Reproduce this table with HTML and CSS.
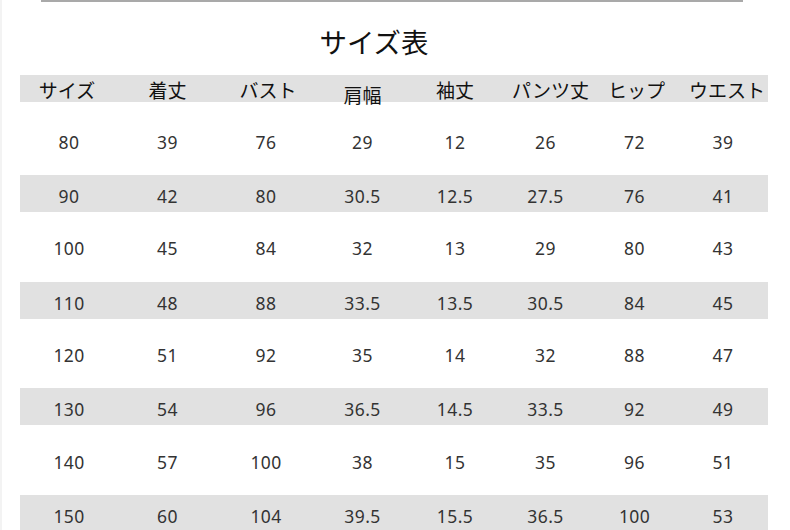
FILE: index.html
```html
<!DOCTYPE html>
<html lang="ja">
<head>
<meta charset="utf-8">
<link rel="stylesheet" href="styles.css">
</head>
<body>
<div class="page">
  <div class="topline"></div>
  <h1 class="title">サイズ表</h1>
  <div class="table">
    <div class="row head">
      <div>サイズ</div><div>着丈</div><div>バスト</div><div class="low">肩幅</div><div>袖丈</div><div>パンツ丈</div><div>ヒップ</div><div>ウエスト</div>
    </div>
    <div class="row first"><div>80</div><div>39</div><div>76</div><div>29</div><div>12</div><div>26</div><div>72</div><div>39</div></div>
    <div class="row alt"><div>90</div><div>42</div><div>80</div><div>30.5</div><div>12.5</div><div>27.5</div><div>76</div><div>41</div></div>
    <div class="row"><div>100</div><div>45</div><div>84</div><div>32</div><div>13</div><div>29</div><div>80</div><div>43</div></div>
    <div class="row alt"><div>110</div><div>48</div><div>88</div><div>33.5</div><div>13.5</div><div>30.5</div><div>84</div><div>45</div></div>
    <div class="row"><div>120</div><div>51</div><div>92</div><div>35</div><div>14</div><div>32</div><div>88</div><div>47</div></div>
    <div class="row alt"><div>130</div><div>54</div><div>96</div><div>36.5</div><div>14.5</div><div>33.5</div><div>92</div><div>49</div></div>
    <div class="row"><div>140</div><div>57</div><div>100</div><div>38</div><div>15</div><div>35</div><div>96</div><div>51</div></div>
    <div class="row alt"><div>150</div><div>60</div><div>104</div><div>39.5</div><div>15.5</div><div>36.5</div><div>100</div><div>53</div></div>
  </div>
</div>
</body>
</html>
```

FILE: styles.css
```css
html, body {
  margin: 0;
  padding: 0;
  background: #ffffff;
}
.page {
  width: 790px;
  height: 530px;
  overflow: hidden;
  border-left: 2px solid #f3f3f3;
  box-sizing: border-box;
}
.topline {
  margin-left: 39px;
  width: 702px;
  height: 2px;
  background: #a9a9a9;
}
.title {
  margin: 0;
  padding: 21px 44px 0 0;
  height: 51px;
  box-sizing: border-box;
  text-align: center;
  font-family: "Noto Sans CJK JP", sans-serif;
  font-weight: 400;
  font-size: 27.5px;
  line-height: 36px;
  color: #111;
  overflow: visible;
}
.table {
  margin-left: 18px;
  margin-top: 22px;
  width: 748px;
}
.row {
  display: grid;
  grid-template-columns: 98px 99px 98px 95px 90px 91px 87px 90px;
  align-items: center;
  height: 69.67px;
  font-family: "Noto Sans", "Open Sans", sans-serif;
  font-size: 17.5px;
  letter-spacing: 0.4px;
  color: #333;
  text-align: center;
  padding-top: 3px;
  box-sizing: border-box;
}
.row.first {
  height: 73px;
  padding-top: 7px;
}
.row.alt {
  height: 37px;
  background: #e1e1e1;
  padding-top: 5px;
}
.row.head {
  height: 27px;
  background: #e1e1e1;
  font-family: "Noto Sans CJK JP", sans-serif;
  font-size: 19px;
  letter-spacing: 0;
  color: #111;
  padding-top: 3px;
  line-height: 22px;
}
.row.head > div {
  white-space: nowrap;
}
.row.head > div:nth-child(1) {
  padding-right: 4px;
}
.row.head > div:nth-child(3) {
  padding-left: 4px;
}
.row.head > div:nth-child(6) {
  padding-left: 10px;
}
.row.head > div:nth-child(7) {
  padding-left: 4px;
}
.row.head > div:nth-child(8) {
  padding-left: 8px;
}
.row.head .low {
  position: relative;
  top: 5px;
}
```
